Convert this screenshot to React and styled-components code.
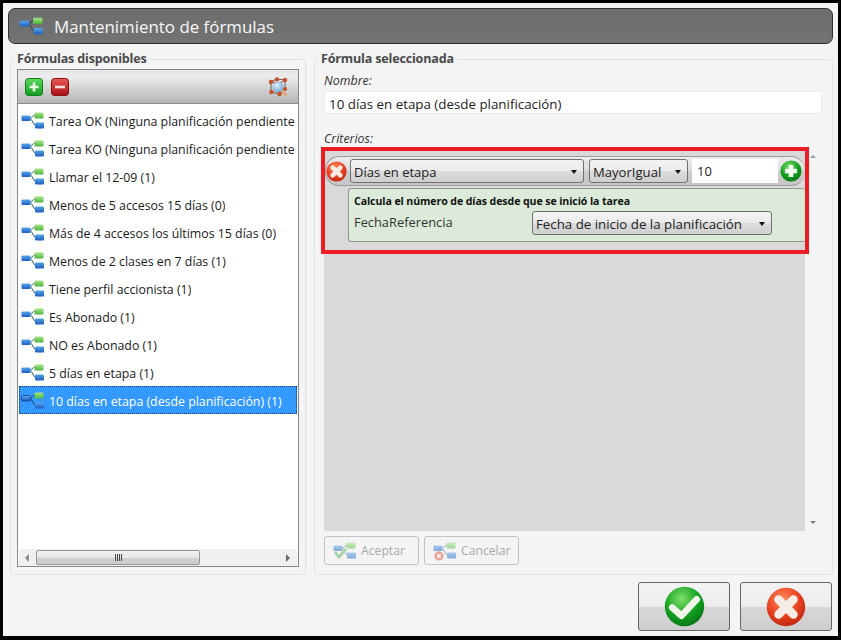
import React, { useId } from 'react';
import styled, { createGlobalStyle } from 'styled-components';

const UI_FONT = '"Open Sans", "Noto Sans", "Liberation Sans", sans-serif';

const Global = createGlobalStyle`
  html, body { margin: 0; padding: 0; background: #000; }
  body { width: 841px; height: 640px; overflow: hidden; font-family: ${UI_FONT}; }
`;

const Frame = styled.div`
  box-sizing: border-box;
  width: 835px;
  height: 633px;
  margin: 3px 0 0 3px;
  padding: 5px 5px 5px 5px;
  background: #f4f4f4;
  display: flex;
  flex-direction: column;
`;

const Header = styled.header`
  box-sizing: border-box;
  height: 36px;
  flex: none;
  border: 1px solid #2e2e2e;
  border-radius: 7px;
  background: linear-gradient(#6d6d6d, #737373);
  color: #f7f7f7;
  display: flex;
  align-items: center;
  gap: 10px;
  padding-left: 10px;
  font-size: 16.9px;
`;

const Columns = styled.div`
  display: flex;
  gap: 8px;
  margin: 7px 0 0 2px;
  height: 524px;
  flex: none;
`;

const Group = styled.fieldset`
  box-sizing: border-box;
  margin: 0;
  padding: 0 6px 7px;
  min-width: 0;
  width: ${p => p.$width}px;
  height: 100%;
  border: 1px solid #e0e3e6;
  border-radius: 4px;
  display: flex;
  flex-direction: column;
`;

const GroupTitle = styled.legend`
  margin-left: -3px;
  padding: 0 3px;
  height: 16px;
  line-height: 16px;
  font-size: 12.6px;
  font-weight: 700;
  letter-spacing: -0.2px;
  color: #4a4a4a;
`;

const ListBox = styled.div`
  box-sizing: border-box;
  flex: 1;
  margin-top: 2px;
  border: 1px solid #828790;
  background: #fff;
  display: flex;
  flex-direction: column;
  overflow: hidden;
`;

const Toolbar = styled.div`
  box-sizing: border-box;
  height: 34px;
  flex: none;
  display: flex;
  align-items: center;
  gap: 8px;
  padding: 0 10px 0 7px;
  background: linear-gradient(#e6e6e6, #ececec 20%, #b5b5b5);
  border-bottom: 1px solid #8c8c8c;
`;

const ToolSpacer = styled.div`
  flex: 1;
`;

const Items = styled.ul`
  list-style: none;
  margin: 0;
  padding: 2px 1px 0;
  flex: 1;
  overflow: hidden;
`;

const Item = styled.li`
  box-sizing: border-box;
  height: 28px;
  display: flex;
  align-items: center;
  gap: 4px;
  padding: 0 2px 0 2px;
  white-space: nowrap;
  font-size: 12.35px;
  color: ${p => (p.$selected ? '#fff' : '#1a1a1a')};
  background: ${p => (p.$selected ? '#3399ff' : 'transparent')};
  outline: ${p => (p.$selected ? '1px dotted #12356a' : 'none')};
  outline-offset: -1px;
`;

const ItemLabel = styled.span`
  min-width: 0;
  overflow: hidden;
  margin-top: 3px;
`;

const HScroll = styled.div`
  box-sizing: border-box;
  height: 17px;
  margin: 0 1px;
  flex: none;
  background: #f0f0f0;
  display: flex;
  align-items: center;
  justify-content: space-between;
  padding: 0 7px 0 6px;
`;

const HThumb = styled.div`
  box-sizing: border-box;
  width: 164px;
  height: 15px;
  margin: 0 auto 0 7px;
  border: 1px solid #979797;
  border-radius: 2px;
  background: linear-gradient(#f2f2f2, #e6e6e6 50%, #d0d0d0 50%, #cdcdcd);
  display: flex;
  align-items: center;
  justify-content: center;
  gap: 1px;
`;

const Grip = styled.span`
  width: 1px;
  height: 7px;
  background: #444;
`;

const ArrowLeft = styled.span`
  width: 0;
  height: 0;
  border-style: solid;
  border-width: 4px 4px 4px 0;
  border-color: transparent #8a8a8a transparent transparent;
`;

const ArrowRight = styled.span`
  width: 0;
  height: 0;
  border-style: solid;
  border-width: 4px 0 4px 4px;
  border-color: transparent transparent transparent #6a6a6a;
`;

const FieldLabel = styled.div`
  font-size: 12.4px;
  font-style: italic;
  color: #333;
  height: 16px;
  line-height: 16px;
  margin: ${p => p.$top}px 0 0 3px;
`;

const NameInput = styled.div`
  box-sizing: border-box;
  height: 23px;
  flex: none;
  margin: 2px 4px 0 3px;
  padding-left: 4px;
  line-height: 25px;
  background: #fff;
  border: 1px solid #ececec;
  font-size: 13.35px;
  color: #222;
  overflow: hidden;
`;

const CriteriaWrap = styled.div`
  flex: none;
  height: 381px;
  margin: 3px 0 0 3px;
  display: flex;
  position: relative;
`;

const CriteriaArea = styled.div`
  box-sizing: border-box;
  width: 481px;
  flex: none;
  background: #d9d9d9;
  padding-top: 6px;
`;

const VScroll = styled.div`
  flex: 1;
  display: flex;
  flex-direction: column;
  align-items: center;
  justify-content: space-between;
  padding: 5px 0 7px;
  margin-right: 5px;
`;

const ArrowUp = styled.span`
  width: 0;
  height: 0;
  border-style: solid;
  border-width: 0 3.5px 3.5px;
  border-color: transparent transparent #9a9a9a;
`;

const ArrowDown = styled.span`
  width: 0;
  height: 0;
  border-style: solid;
  border-width: 3.5px 3.5px 0;
  border-color: #7a7a7a transparent transparent;
`;

const Highlight = styled.div`
  position: absolute;
  left: -3px;
  top: -3px;
  width: 488px;
  height: 107px;
  box-sizing: border-box;
  border: 4px solid #ed1c24;
  pointer-events: none;
`;

const RulePill = styled.div`
  box-sizing: border-box;
  height: 30px;
  margin-left: 1px;
  border: 1px solid #9c9c9c;
  border-right-width: 0;
  border-radius: 14px;
  background: linear-gradient(#ececec, #dcdcdc 50%, #cdcdcd 50%, #c6c6c6);
  display: flex;
  align-items: center;
`;

const Combo = styled.div`
  box-sizing: border-box;
  width: ${p => p.$width}px;
  height: 24px;
  flex: none;
  margin-left: ${p => p.$gap}px;
  border: 1px solid #707070;
  border-radius: 3px;
  background: linear-gradient(#f3f3f3, #ebebeb 50%, #dddddd 50%, #cfcfcf);
  display: flex;
  align-items: center;
  justify-content: space-between;
  padding: 1px 6px 0 3px;
  font-size: ${p => p.$size}px;
  white-space: nowrap;
  color: #222;
`;

const ComboArrow = styled.span`
  width: 0;
  height: 0;
  flex: none;
  border-style: solid;
  border-width: 4px 3.5px 0;
  border-color: #111 transparent transparent;
`;

const ValueInput = styled.div`
  box-sizing: border-box;
  width: 86px;
  height: 24px;
  flex: none;
  margin: 0 2px 0 4px;
  padding-left: 5px;
  line-height: 25px;
  background: #fff;
  font-size: 13px;
  color: #222;
`;

const RuleDetail = styled.div`
  box-sizing: border-box;
  height: 54px;
  margin: 2px 0 0 24px;
  padding: 5px 5px 0;
  background: #dcebd9;
  border: 1px solid #8f9a8d;
  border-right-width: 0;
  border-radius: 3px;
`;

const DetailTitle = styled.div`
  font-size: 10.6px;
  font-weight: 700;
  line-height: 14px;
  letter-spacing: -0.1px;
  white-space: nowrap;
  color: #111;
`;

const DetailRow = styled.div`
  display: flex;
  align-items: flex-start;
  justify-content: space-between;
  padding-right: 28px;
  margin-top: 3px;
`;

const DetailLabel = styled.span`
  font-size: 12.85px;
  line-height: 17px;
  margin-top: 3px;
  color: #333;
`;

const FormActions = styled.div`
  display: flex;
  gap: 5px;
  margin: 5px 0 0 3px;
`;

const FormButton = styled.button`
  box-sizing: border-box;
  width: 95px;
  height: 29px;
  padding: 0 0 0 8px;
  border: 1px solid #c3c3c3;
  border-radius: 3px;
  background: #f4f4f4;
  display: flex;
  align-items: center;
  gap: 4px;
  font-family: inherit;
  font-size: 12.2px;
  color: #a9a9a9;
`;

const Footer = styled.footer`
  flex: 1;
  display: flex;
  justify-content: flex-end;
  gap: 10px;
  align-items: flex-start;
  padding: 7px 1px 0 0;
`;

const BigButton = styled.button`
  box-sizing: border-box;
  width: ${p => p.$width}px;
  height: 49px;
  padding: 0;
  border: 1px solid #666;
  border-radius: 3px;
  background: linear-gradient(#f3f3f3, #ececec 50%, #d8d8d8 50%, #cdcdcd);
  display: flex;
  align-items: center;
  justify-content: center;
`;

const DimIcon = styled.svg`
  opacity: 0.5;
  flex: none;
`;

const ItemIcon = styled.svg`
  flex: none;
  display: block;
`;

function FormulaNodes({ selected }) {
  const id = useId();
  return (
    <>
      <defs>
        <linearGradient id={id + 'b'} x1="0" y1="0" x2="0" y2="1">
          <stop offset="0" stopColor="#5aa5ea" />
          <stop offset="1" stopColor="#1a5fc0" />
        </linearGradient>
        <linearGradient id={id + 'g'} x1="0" y1="0" x2="0" y2="1">
          <stop offset="0" stopColor="#a6e58a" />
          <stop offset="1" stopColor="#4eb53c" />
        </linearGradient>
      </defs>
      <path d="M9.5 6 C 11.5 6 11.5 3.5 14 3 M9.5 7 C 12 8 12 13 15 13.5" fill="none" stroke={selected ? '#0b3a6e' : '#2b4a66'} strokeWidth="1" />
      <rect x="0.5" y="3.5" width="9" height="5.5" rx="1" fill={`url(#${id}b)`} stroke={selected ? '#113a80' : 'none'} strokeWidth="0.7" />
      <rect x="13.5" y="0.5" width="9" height="6" rx="1" fill={`url(#${id}g)`} />
      <rect x="14" y="10.5" width="9" height="6" rx="1" fill={`url(#${id}b)`} />
    </>
  );
}

function FormulaIcon({ selected }) {
  return (
    <ItemIcon width="24" height="17" viewBox="0 0 24 17">
      <FormulaNodes selected={selected} />
    </ItemIcon>
  );
}

function SquareButton({ kind }) {
  const id = useId();
  const [a, b, edge] = kind === 'plus' ? ['#5fdc5f', '#129a1e', '#0d7f18'] : ['#ea5a55', '#a90f12', '#8a0d10'];
  return (
    <ItemIcon width="18" height="18" viewBox="0 0 18 18">
      <defs>
        <linearGradient id={id} x1="0" y1="0" x2="0" y2="1">
          <stop offset="0" stopColor={a} />
          <stop offset="1" stopColor={b} />
        </linearGradient>
      </defs>
      <rect x="0.5" y="0.5" width="17" height="17" rx="3" fill={`url(#${id})`} stroke={edge} />
      {kind === 'plus' ? (
        <path d="M9 4.5v9M4.5 9h9" stroke="#eafbe6" strokeWidth="2.6" />
      ) : (
        <path d="M4 9h10" stroke="#f6dede" strokeWidth="2.6" />
      )}
    </ItemIcon>
  );
}

function CrystalIcon() {
  const id = useId();
  return (
    <ItemIcon width="20" height="20" viewBox="0 0 20 20">
      <defs>
        <radialGradient id={id} cx="0.4" cy="0.35" r="0.7">
          <stop offset="0" stopColor="#e2f1fb" />
          <stop offset="1" stopColor="#6aa4cf" />
        </radialGradient>
      </defs>
      <path d="M3 5 L8 2 L17 3 L17 13 L12 17 L3 15 Z M3 5 L12 6 L17 3 M12 6 L12 17" fill="none" stroke="#6a5a55" strokeWidth="1" />
      <circle cx="10" cy="10" r="5.4" fill={`url(#${id})`} />
      <g fill="#c8502a">
        <circle cx="3" cy="5" r="2.2" />
        <circle cx="9" cy="2.4" r="2.2" />
        <circle cx="17" cy="3" r="2.2" />
        <circle cx="17" cy="12" r="2" />
        <circle cx="11.5" cy="17" r="2.2" />
        <circle cx="3.4" cy="15" r="2.2" />
      </g>
      <path d="M14 14 L18.5 18.5" stroke="#e8a060" strokeWidth="2" />
    </ItemIcon>
  );
}

function RoundIcon({ kind, size }) {
  const id = useId();
  const green = kind !== 'cross';
  const stops = green ? ['#7fe06a', '#12a020', '#066a10'] : ['#ff8a5c', '#e8401f', '#b3200c'];
  return (
    <ItemIcon width={size} height={size} viewBox="0 0 40 40">
      <defs>
        <radialGradient id={id} cx="0.42" cy="0.3" r="0.8">
          <stop offset="0" stopColor={stops[0]} />
          <stop offset="0.55" stopColor={stops[1]} />
          <stop offset="1" stopColor={stops[2]} />
        </radialGradient>
      </defs>
      <circle cx="20" cy="20" r="19.2" fill={`url(#${id})`} />
      {kind === 'plus' && <path d="M20 9v22M9 20h22" stroke="#f4fbf0" strokeWidth="8.5" />}
      {kind === 'cross' && <path d="M12.5 12.5 L27.5 27.5 M27.5 12.5 L12.5 27.5" stroke="#f5ece6" strokeWidth="8.5" strokeLinecap="round" />}
      {kind === 'check' && <path d="M8 21 L17 29 L32 13" fill="none" stroke="#eef6ea" strokeWidth="6.5" strokeLinecap="round" strokeLinejoin="round" />}
    </ItemIcon>
  );
}

function ActionIcon({ kind }) {
  return (
    <DimIcon width="24" height="20" viewBox="0 0 24 20">
      <g transform="translate(0 1)">
        <FormulaNodes />
      </g>
      {kind === 'accept' ? (
        <path d="M2 11 L6 16 L13 8" fill="none" stroke="#4caf50" strokeWidth="2.6" />
      ) : (
        <>
          <circle cx="6" cy="15" r="4.6" fill="#e0503a" />
          <path d="M4.2 13.2 L7.8 16.8 M7.8 13.2 L4.2 16.8" stroke="#fff" strokeWidth="1.4" />
        </>
      )}
    </DimIcon>
  );
}

const FORMULAS = [
  'Tarea OK (Ninguna planificación pendiente)',
  'Tarea KO (Ninguna planificación pendiente)',
  'Llamar el 12-09 (1)',
  'Menos de 5 accesos 15 días (0)',
  'Más de 4 accesos los últimos 15 días (0)',
  'Menos de 2 clases en 7 días (1)',
  'Tiene perfil accionista (1)',
  'Es Abonado (1)',
  'NO es Abonado (1)',
  '5 días en etapa (1)',
  '10 días en etapa (desde planificación) (1)',
];

export default function App() {
  return (
    <>
      <Global />
      <Frame>
        <Header>
          <ItemIcon width="25" height="18" viewBox="0 0 24 17">
            <FormulaNodes />
          </ItemIcon>
          Mantenimiento de fórmulas
        </Header>
        <Columns>
          <Group $width={296}>
            <GroupTitle>Fórmulas disponibles</GroupTitle>
            <ListBox>
              <Toolbar>
                <SquareButton kind="plus" />
                <SquareButton kind="minus" />
                <ToolSpacer />
                <CrystalIcon />
              </Toolbar>
              <Items>
                {FORMULAS.map((f, i) => (
                  <Item key={f} $selected={i === FORMULAS.length - 1}>
                    <FormulaIcon selected={i === FORMULAS.length - 1} />
                    <ItemLabel>{f}</ItemLabel>
                  </Item>
                ))}
              </Items>
              <HScroll>
                <ArrowLeft />
                <HThumb>
                  <Grip />
                  <Grip />
                  <Grip />
                  <Grip />
                </HThumb>
                <ArrowRight />
              </HScroll>
            </ListBox>
          </Group>
          <Group $width={519}>
            <GroupTitle>Fórmula seleccionada</GroupTitle>
            <FieldLabel $top={6}>Nombre:</FieldLabel>
            <NameInput>10 días en etapa (desde planificación)</NameInput>
            <FieldLabel $top={17}>Criterios:</FieldLabel>
            <CriteriaWrap>
              <CriteriaArea>
                <RulePill>
                  <RoundIcon kind="cross" size={21} />
                  <Combo $width={234} $gap={3} $size={13}>
                    Días en etapa
                    <ComboArrow />
                  </Combo>
                  <Combo $width={99} $gap={5} $size={13.1}>
                    MayorIgual
                    <ComboArrow />
                  </Combo>
                  <ValueInput>10</ValueInput>
                  <RoundIcon kind="plus" size={22} />
                </RulePill>
                <RuleDetail>
                  <DetailTitle>Calcula el número de días desde que se inició la tarea</DetailTitle>
                  <DetailRow>
                    <DetailLabel>FechaReferencia</DetailLabel>
                    <Combo $width={240} $gap={0} $size={13.3}>
                      Fecha de inicio de la planificación
                      <ComboArrow />
                    </Combo>
                  </DetailRow>
                </RuleDetail>
              </CriteriaArea>
              <VScroll>
                <ArrowUp />
                <ArrowDown />
              </VScroll>
              <Highlight />
            </CriteriaWrap>
            <FormActions>
              <FormButton disabled>
                <ActionIcon kind="accept" />
                Aceptar
              </FormButton>
              <FormButton disabled>
                <ActionIcon kind="cancel" />
                Cancelar
              </FormButton>
            </FormActions>
          </Group>
        </Columns>
        <Footer>
          <BigButton $width={92}>
            <RoundIcon kind="check" size={41} />
          </BigButton>
          <BigButton $width={92}>
            <RoundIcon kind="cross" size={40} />
          </BigButton>
        </Footer>
      </Frame>
    </>
  );
}
